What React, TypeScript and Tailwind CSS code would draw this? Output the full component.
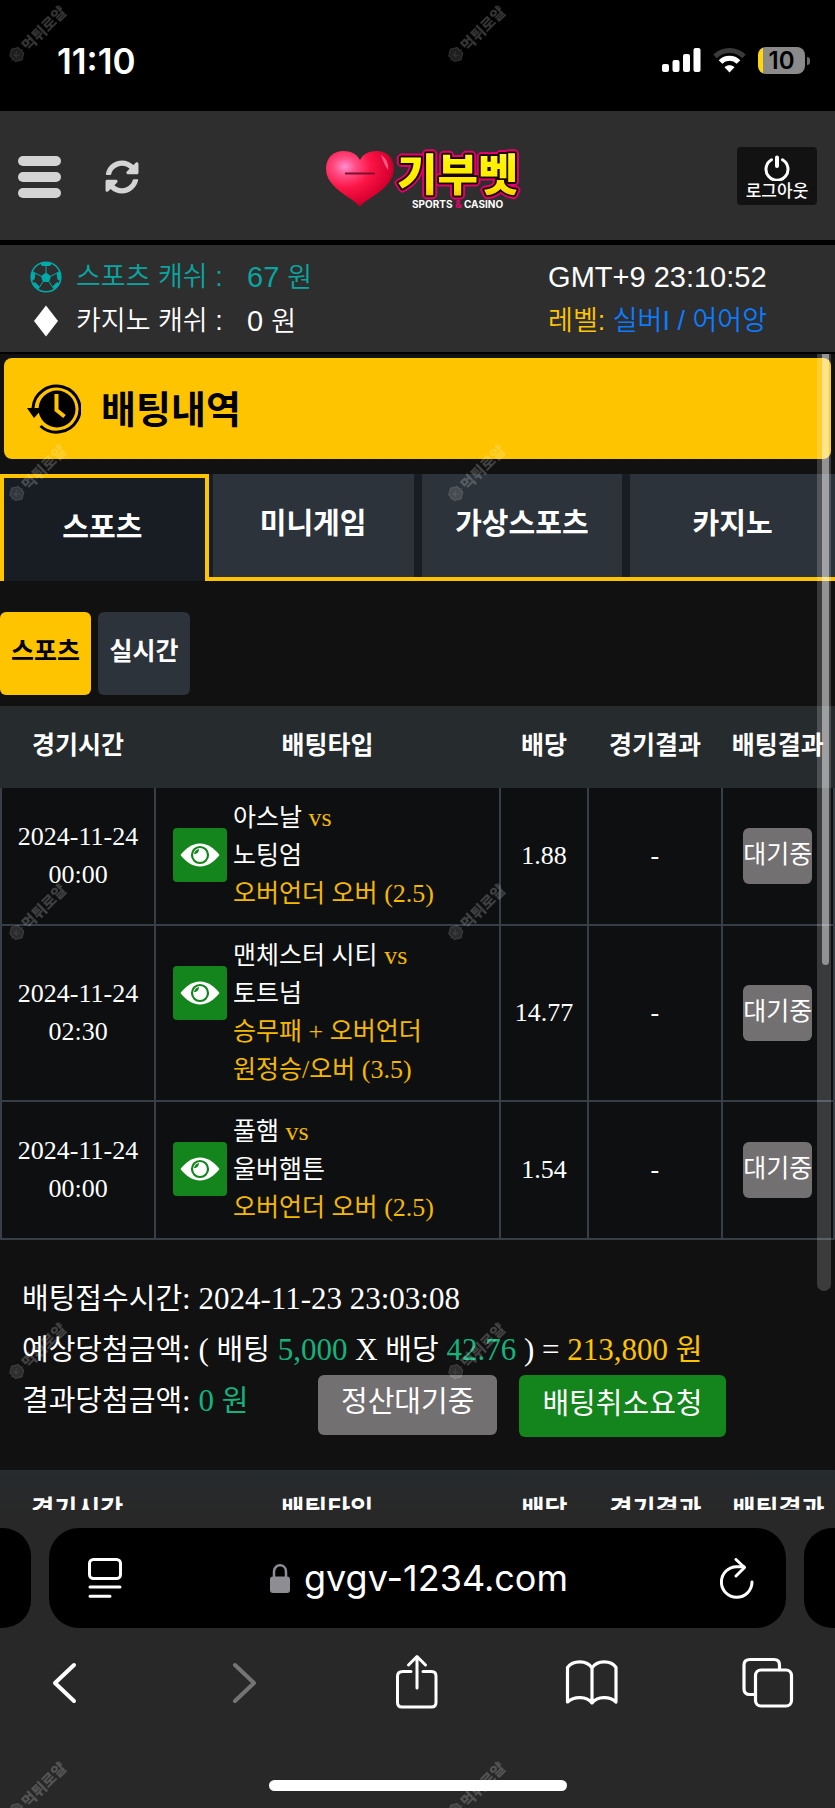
import React from 'react';
import { FaSyncAlt } from 'react-icons/fa';

type Bet = {
  date: string;
  time: string;
  home: string;
  away: string;
  picks: string[];
  odds: string;
};

const SANS = "font-['Liberation_Sans','Noto_Sans_CJK_KR',sans-serif]";
const SERIF = "font-['Liberation_Serif','Noto_Sans_CJK_KR',serif]";
const KOREAN = "font-['Noto_Sans_CJK_KR',sans-serif]";
const SYSTEM = "font-['Inter',sans-serif]";

const tabs = ['스포츠', '미니게임', '가상스포츠', '카지노'];
const columns = ['경기시간', '배팅타입', '배당', '경기결과', '배팅결과'];

const bets: Bet[] = [
  { date: '2024-11-24', time: '00:00', home: '아스날', away: '노팅엄', picks: ['오버언더 오버 (2.5)'], odds: '1.88' },
  { date: '2024-11-24', time: '02:30', home: '맨체스터 시티', away: '토트넘', picks: ['승무패 + 오버언더', '원정승/오버 (3.5)'], odds: '14.77' },
  { date: '2024-11-24', time: '00:00', home: '풀햄', away: '울버햄튼', picks: ['오버언더 오버 (2.5)'], odds: '1.54' },
];

function StatusBar() {
  return (
    <div className={`flex h-[111px] items-start justify-between bg-black pl-[57px] pr-[25px] pt-[41px] text-white ${SYSTEM}`}>
      <span className="text-[35px] font-semibold leading-10">11:10</span>
      <div className="flex items-center gap-3 pt-[6px]">
        <svg width="39" height="25" viewBox="0 0 39 25" fill="white" aria-hidden="true">
          <rect x="0" y="16" width="7" height="8" rx="2" />
          <rect x="10.500" y="12" width="7" height="12" rx="2" />
          <rect x="21" y="6" width="7" height="18" rx="2" />
          <rect x="31.500" y="0" width="7" height="24" rx="2" />
        </svg>
        <svg width="33" height="25" viewBox="0 0 33 25" fill="none" aria-hidden="true">
          <path d="M2 8.500 C10 0.500 23 0.500 31 8.500" stroke="#3a3a3a" strokeWidth="5" />
          <path d="M7.500 14 C12.500 9 20.500 9 25.500 14" stroke="white" strokeWidth="5" />
          <path d="M16.500 24.500 L11.500 19.300 C14.500 16.700 18.500 16.700 21.500 19.300 Z" fill="white" />
        </svg>
        <div className="flex items-center gap-[2px]">
          <div className="flex h-[27px] w-[47px] items-center justify-center rounded-lg bg-linear-to-r from-[#ffd60a] from-10% to-[#8a8a8a] to-10% text-[24px] font-semibold leading-6 text-black">
            10
          </div>
          <div className="h-2 w-[3px] rounded-r-full bg-[#6a6a6a]" />
        </div>
      </div>
    </div>
  );
}

function Logo() {
  return (
    <svg width="212" height="70" viewBox="-12 -6 212 70" role="img" aria-label="기부벳 SPORTS & CASINO">
      <defs>
        <radialGradient id="heart" cx="0.28" cy="0.28" r="0.85">
          <stop offset="0" stopColor="#ff8fd0" />
          <stop offset="0.2" stopColor="#ff4a80" />
          <stop offset="0.45" stopColor="#fb1546" />
          <stop offset="0.78" stopColor="#d8002f" />
          <stop offset="1" stopColor="#8c001c" />
        </radialGradient>
        <linearGradient id="gold" x1="0" y1="0" x2="0" y2="1">
          <stop offset="0" stopColor="#fffbb0" />
          <stop offset="0.35" stopColor="#fff200" />
          <stop offset="0.75" stopColor="#ffe600" />
          <stop offset="1" stopColor="#f5a800" />
        </linearGradient>
      </defs>
      <path
        d="M36 60 C32 52 2 42 2 22 C2 10 10 4 19 4 C27 4 33 7 36 13 C39 7 45 4 53 4 C62 4 70 10 70 22 C70 42 40 52 36 60 Z"
        fill="url(#heart)"
      />
      <path d="M57 8 C62 11 65 16 64 23 C61 19 59 14 57 8 Z" fill="#ff7ba0" opacity="0.7" />
      <path d="M21 26.500 H51" stroke="#7d1030" strokeWidth="2" />
      <text
        x="73"
        y="44"
        fontFamily="'Noto Sans CJK KR', sans-serif"
        fontWeight="900"
        fontSize="44"
        fill="url(#gold)"
        stroke="#1a0500"
        strokeWidth="4"
        strokeLinejoin="round"
        paintOrder="stroke"
        className="[filter:drop-shadow(1px_1px_0_#e6006e)_drop-shadow(-1px_-1px_0_#e6006e)_drop-shadow(1px_-1px_0_#e6006e)_drop-shadow(-1px_1px_0_#e6006e)]"
      >
        기부벳
      </text>
      <text x="88" y="61" fontFamily="Inter, sans-serif" fontWeight="700" fontSize="10" fill="white">
        SPORTS <tspan fill="#e6006e">&amp;</tspan> CASINO
      </text>
    </svg>
  );
}

function Header() {
  return (
    <header className="flex h-[134px] items-center justify-between border-b-5 border-black bg-[#2e2e2e] px-[18px]">
      <div className="flex flex-1 items-center gap-11 pt-[3px]">
        <button type="button" aria-label="메뉴" className="flex w-[43px] flex-col gap-[6px]">
          <span className="h-[10px] rounded-full bg-[#d4d4d4]" />
          <span className="h-[10px] rounded-full bg-[#d4d4d4]" />
          <span className="h-[10px] rounded-full bg-[#d4d4d4]" />
        </button>
        <button type="button" aria-label="새로고침">
          <FaSyncAlt size={34} color="#d4d4d4" />
        </button>
      </div>
      <a href="#home">
        <Logo />
      </a>
      <div className="flex flex-1 justify-end">
        <button type="button" className={`flex h-[58px] w-20 flex-col items-center rounded-sm bg-[#121212] pt-2 text-white ${KOREAN}`}>
          <svg width="26" height="26" viewBox="0 0 26 26" fill="none" stroke="white" strokeLinecap="round" aria-hidden="true">
            <path d="M7.500 4.700 A11 11 0 1 0 18.500 4.700" strokeWidth="3" />
            <path d="M13 2.500 V11" strokeWidth="4" />
          </svg>
          <span className="text-[17px] font-medium leading-[18px]">로그아웃</span>
        </button>
      </div>
    </header>
  );
}

function BallIcon() {
  return (
    <svg width="32" height="32" viewBox="0 0 32 32" aria-hidden="true">
      <clipPath id="ball">
        <circle cx="16" cy="16" r="15" />
      </clipPath>
      <circle cx="16" cy="16" r="14.800" fill="none" stroke="#00aba9" strokeWidth="1.600" />
      <g clipPath="url(#ball)" fill="#00aba9" stroke="#00aba9" strokeWidth="1">
        <path d="M16 12 L20.500 15.300 L18.800 20.500 H13.200 L11.500 15.300 Z" />
        <path d="M10 1 L12 4.500 H20 L22 1 V-2 H10 Z" />
        <path d="M32 9 L27 12 L28 18.500 L34 20 Z" />
        <path d="M26 30 L22.500 26 L27 21.500 L34 26 Z" />
        <path d="M6 30 L9.500 26 L5 21.500 L-2 26 Z" />
        <path d="M0 9 L5 12 L4 18.500 L-2 20 Z" />
        <path d="M16 12 V4.500 M20.500 15.300 L27 12 M18.800 20.500 L22.500 26 M13.200 20.500 L9.500 26 M11.500 15.300 L5 12" fill="none" />
      </g>
    </svg>
  );
}

function AccountInfo() {
  return (
    <section className={`flex h-[107px] justify-between bg-[#2e2e2e] pl-[30px] pr-[68px] pt-[10px] text-[29px] leading-[44px] text-white ${SANS}`}>
      <div>
        <div className="flex h-11 items-center text-[#0aa5a0]">
          <BallIcon />
          <span className="ml-[14px] w-[171px] text-[27px] font-[350]">스포츠 캐쉬 :</span>
          <span>67 <span className="text-[27px] font-[350]">원</span></span>
        </div>
        <div className="flex h-11 items-center">
          <svg width="32" height="32" viewBox="0 0 32 32" fill="white" aria-hidden="true">
            <path d="M16 0.500 L28 16 L16 31.500 L4 16 Z" />
          </svg>
          <span className="ml-[14px] w-[171px] text-[27px] font-[350]">카지노 캐쉬 :</span>
          <span>0 <span className="text-[27px] font-[350]">원</span></span>
        </div>
      </div>
      <div>
        <div className="h-11">GMT+9 23:10:52</div>
        <div className="h-11 text-[27px] font-[350] text-[#0a7cff]">
          <span className="text-[#ffc400]">레벨:</span> 실버I / 어어앙
        </div>
      </div>
    </section>
  );
}

function HistoryIcon() {
  return (
    <svg width="54" height="50" viewBox="0 0 54 50" fill="none" aria-hidden="true">
      <path d="M6 24 A23.500 23 0 1 1 13.500 42" stroke="black" strokeWidth="3" />
      <circle cx="30" cy="25" r="18.500" fill="black" />
      <path d="M0 24 H16 L7 34 Z" fill="black" />
      <path d="M29.500 10 V26 L37.500 32.500" stroke="#ffc400" strokeWidth="4" />
    </svg>
  );
}

function Tabs() {
  return (
    <nav className={`mt-[15px] grid h-[107px] grid-cols-4 bg-[#181c23] text-[29px] font-bold text-white ${KOREAN}`}>
      {tabs.map((tab, i) =>
        i === 0 ? (
          <button key={tab} type="button" className="flex items-center justify-center border-x-4 border-t-4 border-[#ffc400] pb-2 pr-1">
            {tab}
          </button>
        ) : (
          <button key={tab} type="button" className="flex border-b-4 border-[#ffc400] px-1 last:pr-0">
            <span className="flex h-full flex-1 items-center justify-center bg-[#2d333b] pb-2">{tab}</span>
          </button>
        ),
      )}
    </nav>
  );
}

function ColumnWidths() {
  return (
    <colgroup>
      <col className="w-[18.500%]" />
      <col className="w-[41.400%]" />
      <col className="w-[10.600%]" />
      <col className="w-[16%]" />
      <col />
    </colgroup>
  );
}

function TableHead() {
  return (
    <thead>
      <tr className={`h-[82px] text-[25px] text-white ${KOREAN}`}>
        {columns.map((name) => (
          <th key={name} className="whitespace-nowrap p-0 pb-[6px] font-bold">
            {name}
          </th>
        ))}
      </tr>
    </thead>
  );
}

function EyeIcon() {
  return (
    <svg width="40" height="24" viewBox="0 0 40 24" aria-hidden="true">
      <path d="M0.500 12 C5 6 12 0.500 20 0.500 C28 0.500 35 6 39.500 12 C35 18 28 23.500 20 23.500 C12 23.500 5 18 0.500 12 Z" fill="white" />
      <circle cx="20" cy="12" r="8" fill="white" stroke="#14851c" strokeWidth="2.200" />
      <path d="M19 6 C19 9 17 11 14 11 C14.500 8.500 16 6.500 19 6 Z" fill="#14851c" />
    </svg>
  );
}

// Hangul runs a size smaller than the Latin text beside them
function Mixed({ text }: { text: string }) {
  return (
    <>
      {text.split(/([가-힣]+)/).map((part, i) =>
        i % 2 === 1 ? (
          <span key={i} className="text-[25px]">{part}</span>
        ) : (
          part
        ),
      )}
    </>
  );
}

function BetRow({ bet }: { bet: Bet }) {
  const cell = 'border-2 border-t-0 border-[#363e48] p-0 text-center';
  return (
    <tr>
      <td className={cell}>
        {bet.date}
        <br />
        {bet.time}
      </td>
      <td className="border-2 border-t-0 border-[#363e48] py-[11px] pl-[17px]">
        <div className="flex items-start gap-[6px]">
          <button type="button" aria-label="경기 보기" className="mt-[29px] flex h-[54px] w-[54px] items-center justify-center rounded-sm bg-[#14851c]">
            <EyeIcon />
          </button>
          <div>
            <p className="h-[38px]">
              <Mixed text={bet.home} /> <span className="text-[#f5b800]">vs</span>
            </p>
            <p className="h-[38px]"><Mixed text={bet.away} /></p>
            {bet.picks.map((pick) => (
              <p key={pick} className="h-[38px] text-[#f5b800]"><Mixed text={pick} /></p>
            ))}
          </div>
        </div>
      </td>
      <td className={cell}>{bet.odds}</td>
      <td className={cell}>-</td>
      <td className={cell}>
        <span className="mx-auto block h-14 w-[69px] rounded-md bg-[#737071] pt-2 text-[25px]">대기중</span>
      </td>
    </tr>
  );
}

function Summary() {
  const ko = 'text-[29px]';
  return (
    <section className={`pb-[33px] pl-[22px] pt-[33px] text-[31px] leading-[51px] text-white ${SERIF}`}>
      <p className="h-[51px] whitespace-nowrap">
        <span className={ko}>배팅접수시간</span>: 2024-11-23 23:03:08
      </p>
      <p className="h-[51px] whitespace-nowrap">
        <span className={ko}>예상당첨금액</span>: ( <span className={ko}>배팅</span> <span className="text-[#14b37d]">5,000</span> X{' '}
        <span className={ko}>배당</span> <span className="text-[#14b37d]">42.76</span> ) ={' '}
        <span className="text-[#ffc400]">213,800 <span className={ko}>원</span></span>
      </p>
      <div className="flex items-start whitespace-nowrap">
        <p className="w-[296px]">
          <span className={ko}>결과당첨금액</span>: <span className="text-[#14b37d]">0 <span className={ko}>원</span></span>
        </p>
        <span className="h-[60px] rounded-md bg-[#737071] px-[23px] pt-[2px] text-[29px]">정산대기중</span>
        <button type="button" className="ml-[22px] h-[62px] rounded-md bg-[#14851c] px-[23px] pb-1 text-[29px]">
          배팅취소요청
        </button>
      </div>
    </section>
  );
}

function BrowserBar() {
  return (
    <footer className="bg-[#282828] pb-[18px] pt-[18px]">
      <div className="flex h-[100px] gap-[18px]">
        <div className="w-[31px] rounded-r-[28px] bg-black" />
        <div className="flex flex-1 items-center rounded-[30px] bg-black pl-[39px] pr-8">
          <button type="button" aria-label="페이지 메뉴">
            <svg width="34" height="40" viewBox="0 0 34 40" fill="none" stroke="white" strokeWidth="3" strokeLinecap="round">
              <rect x="1.500" y="1.500" width="31" height="19" rx="4" />
              <path d="M2 29 H32 M2 38.300 H22" />
            </svg>
          </button>
          <div className="mr-1 flex flex-1 items-center justify-center gap-[14px]">
            <svg width="20" height="29" viewBox="0 0 20 29" aria-hidden="true">
              <path d="M4 14 V8 C4 4 6.500 1.300 10 1.300 C13.500 1.300 16 4 16 8 V14" fill="none" stroke="#8e8d93" strokeWidth="2.500" />
              <rect x="0" y="12.500" width="20" height="16.500" rx="3" fill="#8e8d93" />
            </svg>
            <span className={`text-[36px] leading-10 text-white ${SYSTEM}`}>gvgv-1234.com</span>
          </div>
          <button type="button" aria-label="새로고침">
            <svg width="34" height="41" viewBox="0 0 34 41" fill="none" stroke="white" strokeWidth="3" strokeLinecap="round" strokeLinejoin="round">
              <path d="M32 24 A15.300 15.300 0 1 1 17 8.700 H24" />
              <path d="M16 1.500 L24.500 9.500 L16 18" />
            </svg>
          </button>
        </div>
        <div className="w-[31px] rounded-l-[28px] bg-black" />
      </div>
      <div className="mt-[25px] flex justify-between pl-[37px] pr-10">
        <button type="button" aria-label="뒤로">
          <svg width="54" height="60" viewBox="0 0 54 60" fill="none" stroke="white" strokeWidth="4" strokeLinecap="round" strokeLinejoin="round">
            <path d="M37 12 L18 30 L37 48" />
          </svg>
        </button>
        <button type="button" aria-label="앞으로" disabled>
          <svg width="54" height="60" viewBox="0 0 54 60" fill="none" stroke="#747474" strokeWidth="4" strokeLinecap="round" strokeLinejoin="round">
            <path d="M22 12 L41 30 L22 48" />
          </svg>
        </button>
        <button type="button" aria-label="공유">
          <svg width="54" height="60" viewBox="0 0 54 60" fill="none" stroke="white" strokeWidth="3" strokeLinecap="round" strokeLinejoin="round">
            <path d="M22 18.500 H14 Q8.500 18.500 8.500 23 V49.500 Q8.500 54 13 54 H42.500 Q47 54 47 49.500 V23 Q47 18.500 42.500 18.500 H34" />
            <path d="M28 35 V4 M19.500 12 L28 3.500 L36.500 12" />
          </svg>
        </button>
        <button type="button" aria-label="책갈피">
          <svg width="54" height="60" viewBox="0 0 54 60" fill="none" stroke="white" strokeWidth="3.200" strokeLinecap="round" strokeLinejoin="round">
            <path d="M27 15 C22 7 8 7 2.500 14.500 V49 C9 43 22 43 27 50 C32 43 45 43 51 49 V14.500 C46 7 32 7 27 15 V50" />
          </svg>
        </button>
        <button type="button" aria-label="탭">
          <svg width="54" height="60" viewBox="0 0 54 60" fill="none" stroke="white" strokeWidth="3.200">
            <path d="M14 41.500 H9 Q3 41.500 3 36 V12 Q3 6.500 9 6.500 H33 Q38.500 6.500 38.500 12 V16" />
            <rect x="14.500" y="17" width="36" height="36" rx="5.500" />
          </svg>
        </button>
      </div>
      <div className="mx-auto mt-[67px] h-[11px] w-[298px] rounded-full bg-white" />
    </footer>
  );
}

// repeats over the whole screen every 439px
function Watermarks() {
  return (
    <div className="pointer-events-none absolute inset-0 grid auto-rows-[439px] grid-cols-[439px_439px] overflow-hidden opacity-20" aria-hidden="true">
      {Array.from({ length: 10 }, (_, i) => (
        <div key={i} className="pt-[25px]">
          <div className="flex w-[74px] -rotate-45 items-center gap-px">
            <svg width="18" height="18" viewBox="0 0 18 18" fill="none" stroke="white">
              <path d="M9 1 L15 4.500 V12.500 L9 16 L3 12.500 V4.500 Z" fill="white" fillOpacity="0.6" />
              <path d="M7 6 V11 M11 6 L7.500 8.500 L11 11 M1 9 H3 M15 9 H17" />
            </svg>
            <span className={`whitespace-nowrap text-[15px] font-black leading-5 text-white ${KOREAN}`}>먹튀로얄</span>
          </div>
        </div>
      ))}
    </div>
  );
}

export default function App() {
  return (
    <div className="relative overflow-hidden bg-[#111111]">
      <StatusBar />
      <Header />
      <AccountInfo />
      <main className="relative border-t-2 border-black">
        <div className="mx-1 mt-1 flex h-[101px] items-center gap-5 rounded-lg bg-[#ffc400] pl-[23px]">
          <HistoryIcon />
          <h1 className={`pb-1 text-[38px] font-bold text-black ${KOREAN}`}>배팅내역</h1>
        </div>
        <Tabs />
        <div className={`mb-[11px] mt-[31px] flex gap-[7px] text-[25px] font-bold ${KOREAN}`}>
          <button type="button" className="h-[83px] w-[91px] rounded-md bg-[#ffc400] pb-2 text-black">스포츠</button>
          <button type="button" className="h-[83px] w-[92px] rounded-md bg-[#2d333b] pb-2 text-white">실시간</button>
        </div>
        <div className="bg-[#262b2e]">
          <table className="w-full table-fixed border-collapse">
            <ColumnWidths />
            <TableHead />
            <tbody className={`bg-[#0d0f10] text-[26px] leading-[38px] text-white ${SERIF}`}>
              {bets.map((bet) => (
                <BetRow key={bet.home} bet={bet} />
              ))}
            </tbody>
          </table>
        </div>
        <Summary />
        <div className="h-10 overflow-hidden bg-linear-to-b from-[#262b2e] to-[#282828]">
          <table className="w-full table-fixed border-collapse">
            <ColumnWidths />
            <TableHead />
          </table>
        </div>
        <div className="absolute bottom-[219px] right-1 top-0 w-[14px] rounded-b-full bg-white/18">
          <div className="ml-[5px] h-[611px] w-[7px] rounded-b-full bg-white/45" />
        </div>
      </main>
      <BrowserBar />
      <Watermarks />
    </div>
  );
}
